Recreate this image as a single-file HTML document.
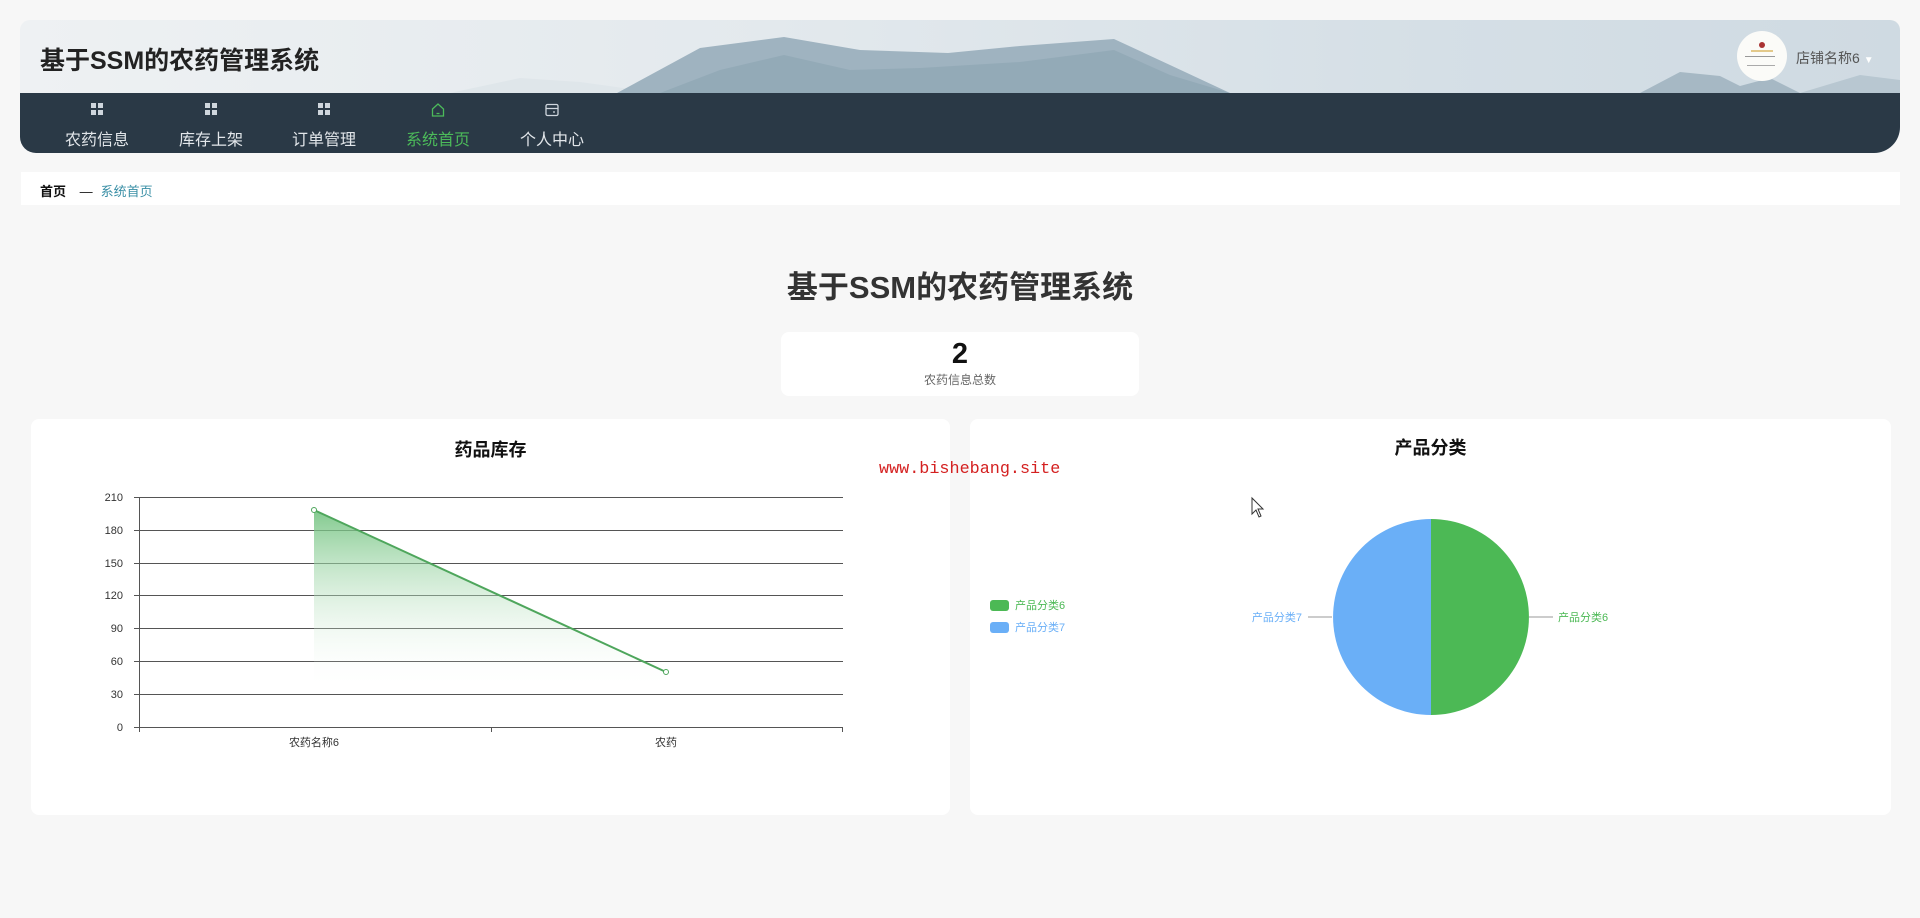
<!DOCTYPE html>
<html><head><meta charset="utf-8"><style>
*{margin:0;padding:0;box-sizing:border-box}
body{width:1920px;height:918px;background:#f7f7f7;font-family:"Liberation Sans","Noto Sans CJK SC",sans-serif;position:relative;overflow:hidden}
.abs{position:absolute}
.hdr{left:20px;top:20px;width:1880px;height:133px;border-radius:10px 10px 26px 16px;overflow:hidden;background:linear-gradient(90deg,#eef1f3 0%,#e3e9ed 40%,#d5dfe6 75%,#cfdae2 100%)}
.nav{left:0;top:73px;width:1880px;height:60px;background:#2a3946}
.ni{position:absolute;top:0;width:100px;text-align:center;color:#e2e6ea;font-size:16px}
.ni .ic{height:18px;margin-top:9px;display:flex;justify-content:center}
.ni .t{margin-top:6px}
.card{background:#fff;border-radius:8px}
</style></head><body>
<div class="abs hdr">
<svg class="abs" style="left:0;top:0" width="1880" height="80">
<polygon points="430,73 500,58 560,62 640,73" fill="#dfe6ea"/>
<polygon points="597,73 680,28 764,17 840,30 928,33 1000,26 1094,19 1150,45 1210,73" fill="#9fb3c0"/>
<polygon points="640,73 700,50 764,35 830,50 900,48 1000,42 1094,30 1150,55 1210,73" fill="#8ea6b4" opacity=".7"/>
<polygon points="1620,73 1660,52 1700,56 1720,66 1750,58 1780,73" fill="#a6b8c4"/>
<polygon points="1780,73 1840,55 1880,60 1880,73" fill="#b8c7d1"/>
</svg>
<div class="abs" style="left:20px;top:21px;font-size:25px;font-weight:bold;color:#222">基于SSM的农药管理系统</div>
<div class="abs" style="left:1717px;top:11px;width:50px;height:50px;border-radius:50%;background:#fbfbf8">
<div class="abs" style="left:22px;top:11px;width:6px;height:6px;border-radius:50%;background:#a33"></div>
<div class="abs" style="left:14px;top:19px;width:22px;height:2px;background:#e3c98a"></div>
<div class="abs" style="left:8px;top:25px;width:30px;height:1px;background:#999"></div>
<div class="abs" style="left:10px;top:34px;width:28px;height:1px;background:#aaa"></div>
</div>
<div class="abs" style="left:1776px;top:28px;font-size:14px;color:#555">店铺名称6 <span style="color:#fff;font-size:10px">▼</span></div>
<div class="abs nav">
<div class="ni" style="left:27px"><div class="ic"><svg width="14" height="14"><rect x="1" y="1" width="5" height="5" fill="#cfd6dd"/><rect x="8" y="1" width="5" height="5" fill="#cfd6dd"/><rect x="1" y="8" width="5" height="5" fill="#cfd6dd"/><rect x="8" y="8" width="5" height="5" fill="#cfd6dd"/></svg></div><div class="t">农药信息</div></div>
<div class="ni" style="left:141px"><div class="ic"><svg width="14" height="14"><rect x="1" y="1" width="5" height="5" fill="#cfd6dd"/><rect x="8" y="1" width="5" height="5" fill="#cfd6dd"/><rect x="1" y="8" width="5" height="5" fill="#cfd6dd"/><rect x="8" y="8" width="5" height="5" fill="#cfd6dd"/></svg></div><div class="t">库存上架</div></div>
<div class="ni" style="left:254px"><div class="ic"><svg width="14" height="14"><rect x="1" y="1" width="5" height="5" fill="#cfd6dd"/><rect x="8" y="1" width="5" height="5" fill="#cfd6dd"/><rect x="1" y="8" width="5" height="5" fill="#cfd6dd"/><rect x="8" y="8" width="5" height="5" fill="#cfd6dd"/></svg></div><div class="t">订单管理</div></div>
<div class="ni" style="left:368px;color:#4cbb5a"><div class="ic"><svg width="16" height="16"><path d="M2.5 7 L8 2 L13.5 7 V14 H2.5 Z M6.5 11.5 H9.5" fill="none" stroke="#4cbb5a" stroke-width="1.3"/></svg></div><div class="t">系统首页</div></div>
<div class="ni" style="left:482px"><div class="ic"><svg width="16" height="16"><rect x="2" y="2.5" width="12" height="11" rx="1.5" fill="none" stroke="#cfd6dd" stroke-width="1.3"/><path d="M2 6.5 H14 M9 10 H11" stroke="#cfd6dd" stroke-width="1.3"/></svg></div><div class="t">个人中心</div></div>
</div>
</div>
<div class="abs" style="left:21px;top:172px;width:1879px;height:33px;background:#fff"></div>
<div class="abs" style="left:40px;top:181px;font-size:13px;color:#111;font-weight:bold">首页 <span style="font-weight:normal;margin:0 8px 0 10px">—</span><span style="font-weight:normal;color:#3a8fa6">系统首页</span></div>
<div class="abs" style="left:0;width:1920px;top:262px;text-align:center;font-size:31px;font-weight:bold;color:#333">基于SSM的农药管理系统</div>
<div class="abs card" style="left:781px;top:332px;width:358px;height:64px;text-align:center">
<div style="font-size:29px;font-weight:bold;color:#111;margin-top:5px;line-height:34px">2</div>
<div style="font-size:12px;color:#666">农药信息总数</div></div>
<div class="abs card" style="left:31px;top:419px;width:919px;height:396px"></div>
<div class="abs card" style="left:970px;top:419px;width:921px;height:396px"></div>
<div class="abs" style="left:31px;width:919px;top:436px;text-align:center;font-size:18px;font-weight:bold;color:#111">药品库存</div>
<div class="abs" style="left:970px;width:921px;top:434px;text-align:center;font-size:18px;font-weight:bold;color:#111">产品分类</div>
<svg class="abs" style="left:0;top:0" width="1920" height="918" font-family="Liberation Sans, Noto Sans CJK SC, sans-serif">
<defs><linearGradient id="g" x1="0" y1="0" x2="0" y2="1"><stop offset="0" stop-color="#6cc07a" stop-opacity=".85"/><stop offset="1" stop-color="#fff" stop-opacity="0"/></linearGradient></defs>
<g stroke="#555" stroke-width="1">
<line x1="139" y1="497.5" x2="843" y2="497.5"/><line x1="139" y1="530.5" x2="843" y2="530.5"/><line x1="139" y1="563.5" x2="843" y2="563.5"/><line x1="139" y1="595.5" x2="843" y2="595.5"/><line x1="139" y1="628.5" x2="843" y2="628.5"/><line x1="139" y1="661.5" x2="843" y2="661.5"/><line x1="139" y1="694.5" x2="843" y2="694.5"/>
<line x1="139" y1="727.5" x2="843" y2="727.5"/><line x1="139.5" y1="497" x2="139.5" y2="732"/>
<line x1="134" y1="497.5" x2="139" y2="497.5"/><line x1="134" y1="530.5" x2="139" y2="530.5"/><line x1="134" y1="563.5" x2="139" y2="563.5"/><line x1="134" y1="595.5" x2="139" y2="595.5"/><line x1="134" y1="628.5" x2="139" y2="628.5"/><line x1="134" y1="661.5" x2="139" y2="661.5"/><line x1="134" y1="694.5" x2="139" y2="694.5"/><line x1="134" y1="727.5" x2="139" y2="727.5"/>
<line x1="491.5" y1="727" x2="491.5" y2="732"/><line x1="842.5" y1="727" x2="842.5" y2="732"/>
</g>
<polygon points="314,510 666,672 666,690 314,690" fill="url(#g)"/>
<line x1="314" y1="510" x2="666" y2="672" stroke="#4ea65c" stroke-width="2"/>
<circle cx="314" cy="510" r="2.5" fill="#fff" stroke="#4ea65c"/><circle cx="666" cy="672" r="2.5" fill="#fff" stroke="#4ea65c"/>
<g font-size="11" fill="#333" text-anchor="end">
<text x="123" y="501">210</text><text x="123" y="534">180</text><text x="123" y="567">150</text><text x="123" y="599">120</text><text x="123" y="632">90</text><text x="123" y="665">60</text><text x="123" y="698">30</text><text x="123" y="731">0</text></g>
<g font-size="11" fill="#333" text-anchor="middle"><text x="314" y="746">农药名称6</text><text x="666" y="746">农药</text></g>
<path d="M1431 519 A98 98 0 0 1 1431 715 Z" fill="#4cb955"/>
<path d="M1431 519 A98 98 0 0 0 1431 715 Z" fill="#6aaff7"/>
<line x1="1308" y1="617" x2="1332" y2="617" stroke="#999"/><line x1="1529" y1="617" x2="1553" y2="617" stroke="#999"/>
<text x="1302" y="621" font-size="11" fill="#6aaff7" text-anchor="end">产品分类7</text>
<text x="1558" y="621" font-size="11" fill="#4cb955">产品分类6</text>
<rect x="990" y="600" width="19" height="11" rx="3" fill="#4cb955"/><text x="1015" y="609" font-size="11" fill="#4cb955">产品分类6</text>
<rect x="990" y="622" width="19" height="11" rx="3" fill="#6aaff7"/><text x="1015" y="631" font-size="11" fill="#6aaff7">产品分类7</text>
<path d="M1252 498 V514 L1256 510 L1259 517 L1261 516 L1258 509 L1263 509 Z" fill="#fff" stroke="#333" stroke-width="1"/>
<text x="879" y="473" font-size="16.8" fill="#d42020" font-family="Liberation Mono, monospace">www.bishebang.site</text>
</svg>
</body></html>
